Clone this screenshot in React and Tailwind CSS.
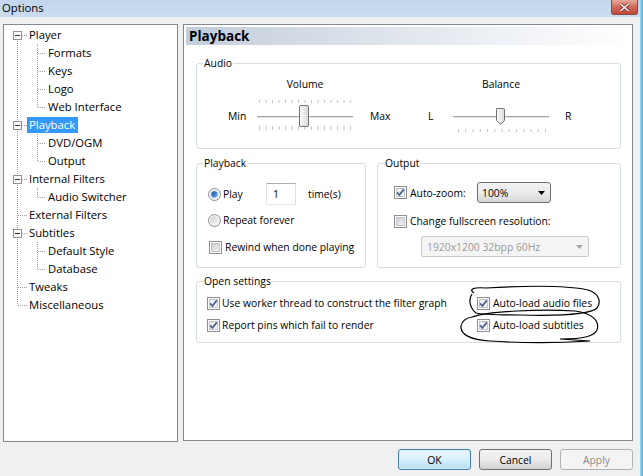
import React from "react";

const FONT = "font-['Open_Sans','Noto_Sans',sans-serif]";

function Radio({ checked, id }) {
  return (
    <svg width="13" height="13" viewBox="0 0 13 13" className="shrink-0">
      <defs>
        <linearGradient id={id} x1="0" y1="0" x2="1" y2="1">
          <stop offset="0" stopColor="#cfd2d6" />
          <stop offset="1" stopColor="#f7f7f7" />
        </linearGradient>
        <linearGradient id={id + "d"} x1="0" y1="0" x2="1" y2="1">
          <stop offset="0" stopColor="#1e5aa8" />
          <stop offset="0.6" stopColor="#3f86d6" />
          <stop offset="1" stopColor="#9fd0ff" />
        </linearGradient>
      </defs>
      <circle cx="6.5" cy="6.5" r="6" fill="#f4f4f4" stroke="#8e8f8f" />
      <circle cx="6.5" cy="6.5" r="4.3" fill={`url(#${id})`} />
      {checked && <circle cx="6.5" cy="6.5" r="3.2" fill={`url(#${id}d)`} />}
    </svg>
  );
}

function Check({ checked, id }) {
  return (
    <svg width="13" height="13" viewBox="0 0 13 13" className="shrink-0">
      <defs>
        <linearGradient id={id} x1="0" y1="0" x2="1" y2="1">
          <stop offset="0" stopColor={checked ? "#e6e9ee" : "#c9ccd2"} />
          <stop offset="1" stopColor={checked ? "#fbfbfb" : "#f3f3f3"} />
        </linearGradient>
      </defs>
      <rect x="0.5" y="0.5" width="12" height="12" fill="#fdfdfd" stroke="#8e8f8f" />
      <rect x="2.5" y="2.5" width="8" height="8" fill={`url(#${id})`} stroke="#c2c5ca" />
      {checked && (
        <path d="M3.2 6.4 L5.4 9 L9.8 3.4" stroke="#4a5d92" strokeWidth="1.7" fill="none" />
      )}
    </svg>
  );
}

function VolumeSlider() {
  const ticks = Array.from({ length: 15 }, (_, i) => 4.5 + i * 6.5);
  return (
    <svg width="100" height="36" viewBox="0 0 100 36" className="shrink-0">
      <defs>
        <linearGradient id="thv" x1="0" y1="0" x2="1" y2="0">
          <stop offset="0" stopColor="#fbfbfb" />
          <stop offset="1" stopColor="#d9d9d9" />
        </linearGradient>
      </defs>
      {ticks.map((x, i) => (
        <line key={"t" + i} x1={x} y1="2" x2={x} y2="5" stroke="#c4c4c4" />
      ))}
      {ticks.map((x, i) => (
        <line key={"b" + i} x1={x} y1="28" x2={x} y2="32" stroke="#c4c4c4" />
      ))}
      <line x1="2" y1="18.5" x2="98" y2="18.5" stroke="#a0a0a0" />
      <line x1="2" y1="19.5" x2="98" y2="19.5" stroke="#e8e8e8" />
      <rect x="44.5" y="7.5" width="9" height="21" rx="1.5" fill="url(#thv)" stroke="#707070" />
    </svg>
  );
}

function BalanceSlider() {
  const ticks = Array.from({ length: 13 }, (_, i) => 7.5 + i * 7.25);
  return (
    <svg width="100" height="36" viewBox="0 0 100 36" className="shrink-0">
      <defs>
        <linearGradient id="thb" x1="0" y1="0" x2="1" y2="0">
          <stop offset="0" stopColor="#fbfbfb" />
          <stop offset="1" stopColor="#d9d9d9" />
        </linearGradient>
      </defs>
      {ticks.map((x, i) => (
        <line key={"b" + i} x1={x} y1="31" x2={x} y2="34" stroke="#c4c4c4" />
      ))}
      <line x1="2" y1="18.5" x2="98" y2="18.5" stroke="#a0a0a0" />
      <line x1="2" y1="19.5" x2="98" y2="19.5" stroke="#e8e8e8" />
      <path
        d="M46.5 10.5 H53.5 Q54.5 10.5 54.5 11.5 V22.5 L50.5 26.5 L46.5 22.5 V11.5 Q46.5 10.5 46.5 10.5 Z"
        transform="translate(-1 0)"
        fill="url(#thb)"
        stroke="#707070"
      />
    </svg>
  );
}

const treeItems = [
  { t: "Player", l: 0, exp: true },
  { t: "Formats", l: 1 },
  { t: "Keys", l: 1 },
  { t: "Logo", l: 1 },
  { t: "Web Interface", l: 1 },
  { t: "Playback", l: 0, exp: true, sel: true },
  { t: "DVD/OGM", l: 1 },
  { t: "Output", l: 1 },
  { t: "Internal Filters", l: 0, exp: true },
  { t: "Audio Switcher", l: 1 },
  { t: "External Filters", l: 0 },
  { t: "Subtitles", l: 0, exp: true },
  { t: "Default Style", l: 1 },
  { t: "Database", l: 1 },
  { t: "Tweaks", l: 0 },
  { t: "Miscellaneous", l: 0 },
];

function TreeLines() {
  const cy = (i) => 10 + 18 * i + 0.5;
  const groups = [
    [0, 4],
    [5, 7],
    [8, 9],
    [11, 13],
  ];
  const dot = { stroke: "#a0a0a0", strokeDasharray: "1 1" };
  return (
    <svg className="absolute left-0 top-0 pointer-events-none" width="173" height="300">
      <line x1="13.5" y1="10" x2="13.5" y2={cy(15)} {...dot} />
      {groups.map(([p, last], k) => (
        <line key={"v" + k} x1="33.5" y1={10 + 18 * p + 9} x2="33.5" y2={cy(last)} {...dot} />
      ))}
      {treeItems.map((it, i) =>
        it.l === 0 ? (
          <line key={"h" + i} x1={it.exp ? 18 : 14} y1={cy(i)} x2="23" y2={cy(i)} {...dot} />
        ) : (
          <line key={"h" + i} x1="34" y1={cy(i)} x2="42" y2={cy(i)} {...dot} />
        )
      )}
      {treeItems.map((it, i) =>
        it.exp ? (
          <g key={"e" + i}>
            <rect x="9.5" y={cy(i) - 4} width="8" height="8" fill="#fcfcfc" stroke="#919191" />
            <line x1="11" y1={cy(i)} x2="16" y2={cy(i)} stroke="#333" />
          </g>
        ) : null
      )}
    </svg>
  );
}

function Tree() {
  return (
    <div className="relative w-[175px] h-[418px] border border-[#828790] bg-white pt-[1px] shrink-0">
      <TreeLines />
      {treeItems.map((it, i) => (
        <div key={i} className="h-[18px] flex items-center">
          <div className={it.l === 0 ? "w-[23px] shrink-0" : "w-[42px] shrink-0"} />
          <span
            className={
              "h-[16px] leading-[16px] px-[2px] text-[11.3px] whitespace-nowrap " +
              (it.sel ? "bg-[#3399ff] text-white pr-[3px]" : "text-black")
            }
          >
            {it.t}
          </span>
        </div>
      ))}
    </div>
  );
}

function Group({ label, className, children }) {
  return (
    <fieldset className={"border border-[#d5dfe5] rounded-[3px] px-0 " + className}>
      <legend className="ml-[6px] px-[1px] h-[16px] leading-[16px]">{label}</legend>
      {children}
    </fieldset>
  );
}

function Arrow({ color }) {
  return (
    <svg width="7" height="4" viewBox="0 0 7 4" className="shrink-0">
      <path d="M0 0 H7 L3.5 4 Z" fill={color} />
    </svg>
  );
}

export default function App() {
  return (
    <div className={"flex w-[643px] h-[476px] bg-[#f0f0f0] overflow-hidden text-black " + FONT}>
      <div className="relative flex flex-col w-[640px]">
        {/* Title bar */}
        <div className="h-[17px] flex items-start justify-between bg-gradient-to-b from-[#c3d6ec] to-[#cadcf0]">
          <span className="pl-[2px] text-[11.3px] leading-[15px]">Options</span>
          <div className="mr-[2px] w-[27px] h-[15px] rounded-b-[3px] border border-t-0 border-[#8d4a44] bg-gradient-to-b from-[#e6a899] via-[#cf6a5b] to-[#c0463a] flex items-center justify-center">
            <svg width="11" height="9" viewBox="0 0 11 9">
              <path d="M1.5 1 L9.5 8 M9.5 1 L1.5 8" stroke="#6b2a24" strokeWidth="3" />
              <path d="M1.5 1 L9.5 8 M9.5 1 L1.5 8" stroke="#ffffff" strokeWidth="1.6" />
            </svg>
          </div>
        </div>

        {/* Main */}
        <div className="mt-[7px] pl-[3px] flex items-start gap-[5px]">
          <Tree />
          <div className="w-[450px] h-[417px] border border-[#828790] bg-white p-[2px] text-[10.35px]">
            <div className="h-[18px] bg-gradient-to-r from-[#c3cdda] via-[#e2e7ee] to-white flex items-center pl-[3px] text-[13.5px] font-bold leading-[18px]">
              Playback
            </div>
            <div className="ml-[10px] w-[425px]">
              {/* Audio */}
              <Group label="Audio" className="mt-[10px] h-[94px]">
                <div className="mt-[5px] h-[16px] flex leading-[16px]">
                  <div className="ml-[58px] w-[100px] text-center">Volume</div>
                  <div className="ml-[96px] w-[100px] text-center">Balance</div>
                </div>
                <div className="mt-[6px] h-[36px] flex items-center pl-[31px] leading-[16px]">
                  <span className="w-[27px] shrink-0">Min</span>
                  <VolumeSlider />
                  <span className="w-[73px] pl-[15px] shrink-0">Max</span>
                  <span className="w-[23px] shrink-0">L</span>
                  <BalanceSlider />
                  <span className="pl-[14px]">R</span>
                </div>
              </Group>

              {/* Playback + Output */}
              <div className="mt-[6px] flex gap-[11px]">
                <Group label="Playback" className="w-[170px] h-[113px]">
                  <div className="mt-[12px] h-[22px] flex items-center pl-[11px] leading-[16px]">
                    <Radio checked id="r1" />
                    <span className="ml-[2px] w-[43px]">Play</span>
                    <div className="w-[30px] h-[22px] border border-[#abadb3] border-b-[#e3e9ef] border-l-[#e2e3ea] border-r-[#dbdfe6] bg-white pl-[6px] flex items-center">
                      1
                    </div>
                    <span className="ml-[12px]">time(s)</span>
                  </div>
                  <div className="mt-[7px] h-[16px] flex items-center pl-[11px] leading-[16px]">
                    <Radio id="r2" />
                    <span className="ml-[2px]">Repeat forever</span>
                  </div>
                  <div className="mt-[11px] h-[16px] flex items-center pl-[12px] leading-[16px]">
                    <Check id="c1" />
                    <span className="ml-[3px] whitespace-nowrap">Rewind when done playing</span>
                  </div>
                </Group>
                <Group label="Output" className="w-[244px] h-[113px]">
                  <div className="mt-[11px] h-[21px] flex items-center pl-[16px] leading-[16px]">
                    <Check checked id="c2" />
                    <span className="ml-[3px] w-[67px]">Auto-zoom:</span>
                    <div className="w-[74px] h-[21px] border border-[#707070] rounded-[3px] bg-gradient-to-b from-[#f3f3f3] via-[#ebebeb] to-[#d6d6d6] flex items-center justify-between pl-[4px] pr-[5px]">
                      <span>100%</span>
                      <Arrow color="#000" />
                    </div>
                  </div>
                  <div className="mt-[10px] h-[16px] flex items-center pl-[16px] leading-[16px]">
                    <Check id="c3" />
                    <span className="ml-[3px] whitespace-nowrap">Change fullscreen resolution:</span>
                  </div>
                  <div className="mt-[7px] pl-[43px]">
                    <div className="w-[168px] h-[21px] border border-[#c9c9c9] rounded-[2px] bg-[#f4f4f4] text-[#9a9a9a] flex items-center justify-between pl-[5px] pr-[5px] leading-[16px]">
                      <span>1920x1200 32bpp 60Hz</span>
                      <Arrow color="#a8a8a8" />
                    </div>
                  </div>
                </Group>
              </div>

              {/* Open settings */}
              <Group label="Open settings" className="mt-[5px] h-[70px]">
                <div className="mt-[6px] pl-[10px] grid grid-cols-[270px_1fr] gap-y-[6px] leading-[16px]">
                  <div className="h-[16px] flex items-center">
                    <Check checked id="c4" />
                    <span className="ml-[2px] whitespace-nowrap">Use worker thread to construct the filter graph</span>
                  </div>
                  <div className="h-[16px] flex items-center">
                    <Check checked id="c5" />
                    <span className="ml-[3px] whitespace-nowrap">Auto-load audio files</span>
                  </div>
                  <div className="h-[16px] flex items-center">
                    <Check checked id="c6" />
                    <span className="ml-[2px] whitespace-nowrap">Report pins which fail to render</span>
                  </div>
                  <div className="h-[16px] flex items-center">
                    <Check checked id="c7" />
                    <span className="ml-[3px] whitespace-nowrap">Auto-load subtitles</span>
                  </div>
                </div>
              </Group>
            </div>
          </div>
        </div>

        {/* Buttons */}
        <div className="mt-[7px] flex justify-end pr-[7px] text-[10.35px] leading-[16px]">
          <div className="w-[73px] h-[21px] rounded-[3px] border border-[#3c7fb1] bg-gradient-to-b from-[#ecf7fd] via-[#d8effc] to-[#b4def5] flex items-center justify-center shadow-[inset_0_0_0_1px_#d6efff]">
            OK
          </div>
          <div className="ml-[8px] w-[73px] h-[21px] rounded-[3px] border border-[#707070] bg-gradient-to-b from-[#f3f3f3] via-[#ebebeb] to-[#d2d2d2] flex items-center justify-center">
            Cancel
          </div>
          <div className="ml-[8px] w-[73px] h-[21px] rounded-[3px] border border-[#adb2b5] bg-[#f4f4f4] text-[#8a8a8a] flex items-center justify-center">
            Apply
          </div>
        </div>

        {/* Hand-drawn marks */}
        <svg className="absolute left-0 top-0 pointer-events-none" width="640" height="476">
          <path
            d="M474 293 C468 289 474 287 486 288 C520 286 565 285 588 290 C598 293 602 301 597 308 C590 315 560 316 520 315 C500 315 484 315 476 313 C470 308 468 300 472 294"
            fill="none"
            stroke="#000"
            strokeWidth="1.2"
          />
          <path
            d="M472 317 C490 311 540 309 575 311 C592 313 600 321 597 330 C594 336 585 339 560 339 L590 341 C560 343 520 343 490 341 C470 340 460 334 461 326 C462 321 466 318 472 317"
            fill="none"
            stroke="#000"
            strokeWidth="1.2"
          />
        </svg>
      </div>
      <div className="w-[3px] h-full bg-gradient-to-r from-[#9fd6f0] to-[#4fb5e3]" />
    </div>
  );
}
